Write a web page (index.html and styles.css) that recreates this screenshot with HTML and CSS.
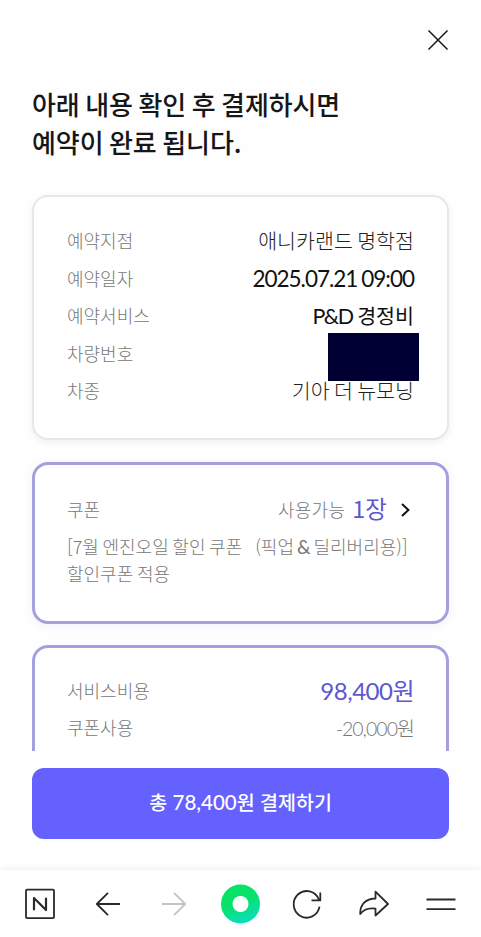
FILE: index.html
```html
<!DOCTYPE html>
<html lang="ko">
<head>
<meta charset="utf-8">
<title>예약 결제</title>
<link rel="stylesheet" href="styles.css">
</head>
<body>
<div class="page">
  <header class="top">
    <svg class="close" viewBox="0 0 22 22"><path d="M1.5 1.5 20.5 20.5M20.5 1.5 1.5 20.5"/></svg>
  </header>
  <main class="content">
    <h1 class="title">아래 내용 확인 후 결제하시면<br>예약이 완료 됩니다.</h1>
    <section class="card info">
      <div class="row"><span class="label">예약지점</span><span class="value">애니카랜드 명학점</span></div>
      <div class="row"><span class="label">예약일자</span><span class="value date">2025.07.21 09:00</span></div>
      <div class="row"><span class="label">예약서비스</span><span class="value service"><span class="latin">P&amp;D</span> 경정비</span></div>
      <div class="row plate"><span class="label">차량번호</span><span class="mask"></span></div>
      <div class="row"><span class="label">차종</span><span class="value">기아 더 뉴모닝</span></div>
    </section>
    <section class="card coupon">
      <div class="row">
        <span class="label">쿠폰</span>
        <span class="available"><span class="label usable">사용가능</span><span class="count">1장</span>
          <svg class="chevron" viewBox="0 0 9 14"><path d="M1 1 7.4 7 1 13"/></svg></span>
      </div>
      <p class="detail">[7월 엔진오일 할인 쿠폰 &nbsp; <span class="option">(픽업<span class="amp">&amp;</span>딜리버리용)]</span><br>할인쿠폰 적용</p>
    </section>
    <section class="card cost">
      <div class="row"><span class="label">서비스비용</span><span class="price">98,400원</span></div>
      <div class="row"><span class="label">쿠폰사용</span><span class="discount">-20,000원</span></div>
    </section>
  </main>
  <div class="action"><button class="pay">총 <span class="amount">78,400</span>원 결제하기</button></div>
  <nav class="nav">
    <svg class="icon" viewBox="0 0 40 40"><rect x="6" y="5.7" width="28" height="28.4" rx="1"/><path class="bold" d="M14 26.200V14L26 26V13.800"/></svg>
    <svg class="icon" viewBox="0 0 40 40"><path d="M33 20H10M21 8.800 9.800 20 21 31.200"/></svg>
    <svg class="icon faded" viewBox="0 0 40 40"><path d="M8 20H31M20 8.800 31.200 20 20 31.200"/></svg>
    <svg class="icon" viewBox="0 0 40 40">
      <defs><linearGradient id="ring" x1=".35" y1="0" x2=".75" y2="1"><stop offset=".4" stop-color="#07e268"/><stop offset="1" stop-color="#0cdcc8"/></linearGradient></defs>
      <circle class="ring" cx="20.500" cy="20" r="19.500"/><circle class="hole" cx="20.500" cy="20" r="8"/></svg>
    <svg class="icon" viewBox="0 0 40 40"><path d="M31.800 15.500A13 13.300 0 1 0 32.500 22.600M33.300 8.500V16.400H24.500"/></svg>
    <svg class="icon" viewBox="0 0 40 40"><path d="M21.500 7.700 34 20 21.500 31.500V24.600C14 23.600 9.500 25.500 6.200 30C5.800 20.500 12 14.600 21.500 14.500Z"/></svg>
    <svg class="icon" viewBox="0 0 40 40"><path d="M5.500 15.500H34.500M5.500 25.200H34.500"/></svg>
  </nav>
</div>
</body>
</html>
```
FILE: styles.css
```css
* { box-sizing: border-box; }
body {
  margin: 0;
  background: #fefefe;
  color: #161616;
  font-family: "Noto Sans CJK KR", sans-serif;
}
.page { display: flex; flex-direction: column; height: 937px; overflow: hidden; }
.top { display: flex; flex: none; justify-content: flex-end; height: 85px; padding: 29px 32px 0 0; }
.close { width: 22px; height: 22px; fill: none; stroke: #161616; stroke-width: 1.5; }
.content { flex: none; height: 666px; padding: 0 32px; overflow: hidden; }
.title { height: 110px; margin: 0; font-size: 26px; font-weight: 500; line-height: 37.5px; letter-spacing: -.1px; word-spacing: -1.600px; }
.card { padding: 23px 32px 0; border: 3px solid #a3a1dd; border-radius: 16px; background: #fff; }
.info { height: 245px; border: 2px solid #e7e7e7; padding: 24.500px 33px 0; box-shadow: 0 2px 7px rgba(0, 0, 0, .06); }
.coupon { height: 162px; margin-top: 22px; padding-top: 25px; box-shadow: 0 2px 8px rgba(90, 90, 220, .07); }
.cost { height: 160px; margin-top: 21px; }
.row { display: flex; align-items: center; justify-content: space-between; height: 37.5px; white-space: nowrap; }
.label { color: #777; font-size: 18px; font-weight: 300; }
.value { color: #222; font-size: 20.600px; font-weight: 300; word-spacing: -1.500px; }
.date { padding-top: 1px; color: #111; font-family: Lato, sans-serif; font-size: 22.500px; font-weight: 400; letter-spacing: -1px; word-spacing: -1px; }
.service { color: #111; font-weight: 400; }
.latin { font-family: Lato, sans-serif; font-size: 21.500px; letter-spacing: -1.300px; }
.mask { flex: none; width: 91px; height: 48px; margin: 8px -5px 0 0; background: #000033; }
.available { display: flex; align-items: center; }
.usable { letter-spacing: .3px; }
.count { margin: -2px 0 0 7px; color: #5c57d1; font-size: 23.500px; line-height: 30px; }
.chevron { width: 9px; height: 14px; margin: 3px 4px 0 14px; fill: none; stroke: #111; stroke-width: 2; }
.detail { margin: 5px 0 0; color: #777; font-size: 18px; font-weight: 300; line-height: 26.500px; word-spacing: -1.400px; white-space: nowrap; }
.option { margin-left: 2px; }
.amp { margin: 0 3px; font-family: Lato, sans-serif; font-size: 19px; font-weight: 400; }
.price { color: #5c57d1; font-family: Lato, "Noto Sans CJK KR", sans-serif; font-size: 24px; letter-spacing: -.5px; }
.discount { color: #777; font-family: Lato, "Noto Sans CJK KR", sans-serif; font-size: 19.500px; font-weight: 300; letter-spacing: -.95px; }
.action { flex: none; height: 119px; padding: 17px 32px 0; }
.pay {
  display: block;
  width: 100%;
  height: 71px;
  padding: 0 0 5px;
  border: 0;
  border-radius: 12px;
  background: #6461ff;
  color: #fff;
  font: 500 19.500px "Noto Sans CJK KR", sans-serif;
}
.amount { font-family: Lato, "Noto Sans CJK KR", sans-serif; font-size: 20.500px; }
.nav {
  display: flex;
  flex: 1;
  justify-content: space-between;
  padding: 14px 20px 0;
  background: #fff;
  box-shadow: 0 -2px 5px rgba(50, 50, 90, .055);
}
.icon { width: 40px; height: 40px; fill: none; stroke: #292a2d; stroke-width: 1.8; stroke-linejoin: round; }
.bold { stroke-width: 2.200; }
.faded { stroke: #c4c4c4; }
.ring { fill: url(#ring); stroke: none; }
.hole { fill: #fff; stroke: none; }
```
